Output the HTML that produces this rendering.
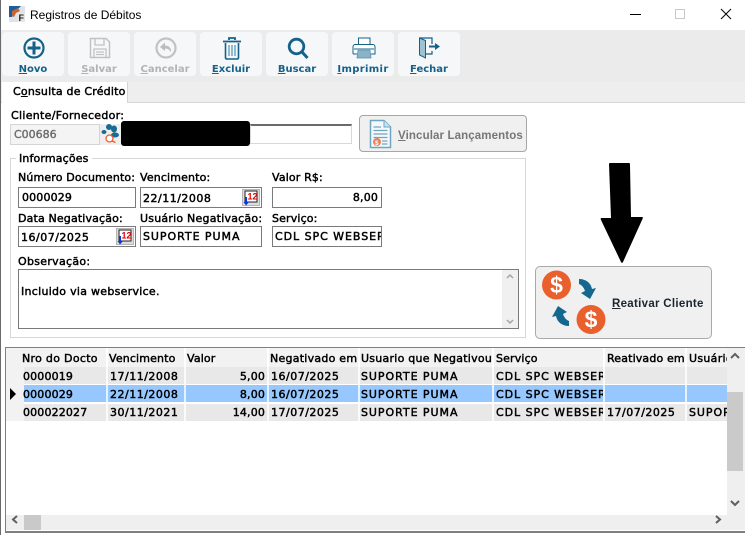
<!DOCTYPE html>
<html><head><meta charset="utf-8"><style>
html,body{margin:0;padding:0;background:#fff}
#w{position:relative;width:745px;height:535px;overflow:hidden;background:#fff;font-family:"DejaVu Sans",sans-serif;font-size:11px;color:#000}
#w div,#w span.a,#w svg{position:absolute}
.t{white-space:pre;line-height:14px;height:14px}
.b{font-weight:normal;-webkit-text-stroke:.45px #000;letter-spacing:.15px}
.tb{top:32px;width:62px;height:44px;background:#f6f7f9;border-radius:4px}
.tl{position:absolute;left:0;right:0;top:31px;text-align:center;font-family:"DejaVu Sans",sans-serif;font-size:10px;font-weight:bold;line-height:13px;color:#14618a}
.dis{color:#b3b3b3}
.i{border:1px solid #7a7a7a;box-sizing:border-box;background:#fff;line-height:20px;padding-left:3px;white-space:pre;overflow:hidden}
.c{height:18px;line-height:20px;white-space:pre;overflow:hidden;box-sizing:border-box;padding-left:3px}
.h{top:349px;height:17px;line-height:19px;white-space:pre;overflow:hidden;padding-left:2px;box-sizing:border-box}
.d{letter-spacing:.5px}
.u{letter-spacing:.95px}
u{text-decoration:underline}
</style></head><body><div id="w">
<div style="left:0;top:0;width:1px;height:535px;background:#6a6a6a"></div>
<svg style="left:9px;top:6px" width="16" height="16" viewBox="0 0 16 16"><rect width="16" height="16" fill="#dfe3e6"/><path d="M0 0H12L8 4 5 6 3 11H0Z" fill="#1f5c9a"/><path d="M3 5 9 2 11 5 7 7 5 11 3 10Z" fill="#c9652e"/><rect x="8" y="7" width="8" height="9" fill="#e6e6e6"/><text x="9.5" y="15" font-family="Liberation Sans" font-size="9" font-weight="bold" fill="#222">F</text></svg>
<div class="t" style="left:30px;top:8px;font-family:'Liberation Sans',sans-serif;font-size:12px">Registros de Débitos</div>
<svg style="left:625px;top:8px" width="110" height="14"><path d="M5 6.5H16" stroke="#000" fill="none"/><rect x="50.500" y="1.500" width="9" height="9" stroke="#c8c8c8" fill="none"/><path d="M96 1 106 11M106 1 96 11" stroke="#000" fill="none"/></svg>

<div style="left:1px;top:30px;width:744px;height:52px;background:#ebebeb"></div>
<div class="tb" style="left:2px"><svg style="left:21px;top:5px" width="22" height="22" viewBox="0 0 22 22"><circle cx="11" cy="11" r="9.500" fill="none" stroke="#14618a" stroke-width="2.200"/><path d="M11 4.500V17.500M4.500 11H17.500" stroke="#14618a" stroke-width="3"/></svg><div class="tl"><u>N</u>ovo</div></div>
<div class="tb" style="left:68px"><svg style="left:21px;top:5px" width="22" height="22" viewBox="0 0 22 22"><path d="M1.500 1.500H17L20.500 5V20.500H1.500Z" fill="none" stroke="#c2c2c2" stroke-width="1.500"/><path d="M6 2V8H15V2M5 20V12H17V20M7 15H15M7 17.500H15" fill="none" stroke="#c2c2c2" stroke-width="1.300"/></svg><div class="tl dis"><u>S</u>alvar</div></div>
<div class="tb" style="left:134px"><svg style="left:21px;top:5px" width="22" height="22" viewBox="0 0 22 22"><circle cx="11" cy="11" r="9.500" fill="none" stroke="#c2c2c2" stroke-width="2.200"/><path d="M10 5.500 5 10 10 14V11.500C13 11.500 15 13 16 15.500 16.500 11 14 8.500 10 8.500Z" fill="#bdbdbd"/></svg><div class="tl dis"><u>C</u>ancelar</div></div>
<div class="tb" style="left:200px"><svg style="left:21px;top:4px" width="22" height="24" viewBox="0 0 22 24"><path d="M2 5.500H20M8 4V2H14V4" fill="none" stroke="#14618a" stroke-width="1.800"/><path d="M4.500 7V21.500C4.500 22.500 5 23 6 23H16C17 23 17.500 22.500 17.500 21.500V7" fill="none" stroke="#14618a" stroke-width="1.600"/><path d="M8 9V20M11 9V20M14 9V20" stroke="#6fa6bf" stroke-width="1.500"/></svg><div class="tl"><u>E</u>xcluir</div></div>
<div class="tb" style="left:266px"><svg style="left:21px;top:5px" width="22" height="23" viewBox="0 0 22 23"><circle cx="9.500" cy="9.500" r="7.300" fill="none" stroke="#14618a" stroke-width="2.800"/><path d="M15 15 20.500 21" stroke="#14618a" stroke-width="3"/></svg><div class="tl"><u>B</u>uscar</div></div>
<div class="tb" style="left:332px"><svg style="left:20px;top:5px" width="24" height="22" viewBox="0 0 24 22"><path d="M6.500 8V1H18V8" fill="#fff" stroke="#14618a"/><path d="M1 17V10C1 8.500 2 7.500 3 7.500H21C22 7.500 23 8.500 23 10V17H19" fill="#fff" stroke="#14618a"/><rect x="2" y="11" width="20" height="2" fill="#8ab3c8"/><path d="M6 13H18L19 21H5Z" fill="#8ab3c8" stroke="#5d93ad" stroke-width=".8"/><path d="M1 17H5" stroke="#14618a"/></svg><div class="tl" style="letter-spacing:.35px"><u>I</u>mprimir</div></div>
<div class="tb" style="left:398px"><svg style="left:20px;top:5px" width="24" height="23" viewBox="0 0 24 23"><path d="M1.500 1H14V7M14 14V17H7.500" fill="none" stroke="#14618a" stroke-width="1.200"/><path d="M1.500 1 7.500 3.500V21L1.500 18Z" fill="#9cc2d4" stroke="#14618a" stroke-width="1"/><path d="M11 8.500H17V6L22 9.500 17 13V10.500H11Z" fill="#14618a"/></svg><div class="tl"><u>F</u>echar</div></div>

<div style="left:1px;top:82px;width:744px;height:21px;background:#eeeeee;border-bottom:1px solid #d8d8d8;box-sizing:border-box"></div>
<div style="left:2px;top:82px;width:126px;height:21px;background:#fff;border-right:1px solid #d4d4d4;box-sizing:border-box"></div>
<div class="t b" style="left:13px;top:85px;letter-spacing:.2px"><span>C<u>o</u>nsulta de Crédito</span></div>

<div class="t b" style="left:11px;top:109px;letter-spacing:.3px">Cliente/Fornecedor:</div>
<div style="left:10px;top:124px;width:90px;height:21px;background:#f4f4f4;border:1px solid #d4d4d4;box-sizing:border-box;line-height:20px;padding-left:3px;color:#6d6d6d;-webkit-text-stroke:.4px #6d6d6d">C00686</div>
<div style="left:100px;top:124px;width:21px;height:21px;background:#eee"></div>
<svg style="left:101px;top:123px" width="20" height="22" viewBox="0 0 20 22"><ellipse cx="8" cy="4" rx="3" ry="3" fill="#1b6a92"/><ellipse cx="13" cy="6" rx="3" ry="3.500" fill="#1b6a92"/><ellipse cx="3" cy="9" rx="2.500" ry="2" fill="#1b6a92"/><ellipse cx="14" cy="12" rx="4" ry="2.500" fill="#1b6a92"/><circle cx="8.500" cy="15.500" r="3.500" fill="#fff" stroke="#e8602c" stroke-width="1.300"/><path d="M11 18 14.500 19.500" stroke="#e8602c" stroke-width="1.300"/></svg>
<div style="left:250px;top:124px;width:102px;height:20px;border:1px solid #d8d8d8;border-top:2px solid #6a6a6a;box-sizing:border-box;background:#fff"></div>
<div style="left:121px;top:121px;width:129px;height:25px;background:#000;border-radius:3px"></div>

<div style="left:359px;top:115px;width:168px;height:37px;background:#f0f0f0;border:1px solid #a6a6a6;border-radius:4px;box-sizing:border-box"></div>
<svg style="left:369px;top:119px" width="23" height="30" viewBox="0 0 23 30"><path d="M1.500 1.500H15L21.500 8V28.500H1.500Z" fill="#f4f8fa" stroke="#6fa6bf" stroke-width="1.500"/><path d="M15 1.500V8H21.500" fill="#cfe1ea" stroke="#6fa6bf"/><path d="M4.500 8H12M4.500 11.500H18.500M4.500 15H18.500M4.500 18.500H18.500M13 22H18.500M13 25H18.500" stroke="#6fa6bf" stroke-width="1.300"/><circle cx="8" cy="23" r="4" fill="#e8805a"/><text x="6" y="26" font-size="6.500" fill="#fff" font-family="Liberation Sans" font-weight="bold">$</text></svg>
<div class="t" style="left:398px;top:129px;font-weight:bold;color:#767676;font-family:'Liberation Sans',sans-serif;letter-spacing:.12px;font-size:11.500px"><u>V</u>incular Lançamentos</div>

<div style="left:10px;top:158px;width:516px;height:180px;border:1px solid #d6d6d6;box-sizing:border-box"></div>
<div class="t b" style="left:16px;top:152px;background:#fff;padding:0 3px">Informações</div>

<div class="t b" style="left:18px;top:171px">Número Documento:</div>
<div class="t b" style="left:140px;top:171px">Vencimento:</div>
<div class="t b" style="left:272px;top:171px">Valor R$:</div>
<div class="i b" style="left:18px;top:187px;width:118px;height:21px">0000029</div>
<div class="i b d" style="left:140px;top:187px;width:122px;height:21px;padding-left:2px;line-height:21px">22/11/2008</div>
<div class="i b" style="left:272px;top:187px;width:110px;height:21px;text-align:right;padding-right:3px">8,00</div>

<div class="t b" style="left:18px;top:212px">Data Negativação:</div>
<div class="t b" style="left:140px;top:212px;letter-spacing:.22px">Usuário Negativação:</div>
<div class="t b" style="left:272px;top:212px">Serviço:</div>
<div class="i b d" style="left:18px;top:226px;width:118px;height:21px;padding-left:2px;line-height:21px">16/07/2025</div>
<div class="i b u" style="left:140px;top:226px;width:122px;height:21px;padding-left:2px">SUPORTE PUMA</div>
<div class="i b u" style="left:272px;top:226px;width:110px;height:21px;padding-right:1px;padding-left:2px"><span style="display:block;width:106px;overflow:hidden">CDL SPC WEBSERVICE</span></div>

<svg style="left:242px;top:189px" width="18" height="17" viewBox="0 0 18 17"><rect x=".5" y=".5" width="17" height="16" fill="#dcdcdc" stroke="#b5b5b5"/><rect x="3" y="2" width="12" height="11" fill="#fff" stroke="#222"/><text x="5.500" y="10.500" font-size="9" fill="#e00000" font-family="Liberation Sans" font-weight="bold">12</text><path d="M3 8H5V13H7L4 16.500 1.500 13H3Z" fill="#0a35d8"/></svg>
<svg style="left:116px;top:228px" width="18" height="17" viewBox="0 0 18 17"><rect x=".5" y=".5" width="17" height="16" fill="#dcdcdc" stroke="#b5b5b5"/><rect x="3" y="2" width="12" height="11" fill="#fff" stroke="#222"/><text x="5.500" y="10.500" font-size="9" fill="#e00000" font-family="Liberation Sans" font-weight="bold">12</text><path d="M3 8H5V13H7L4 16.500 1.500 13H3Z" fill="#0a35d8"/></svg>

<div class="t b" style="left:18px;top:255px;letter-spacing:.3px">Observação:</div>
<div style="left:18px;top:269px;width:501px;height:60px;border:1px solid #7a7a7a;box-sizing:border-box;background:#fff"></div>
<div class="t b" style="left:21px;top:285px;letter-spacing:.28px">Incluido via webservice.</div>
<div style="left:502px;top:270px;width:16px;height:58px;background:#f0f0f0"></div>
<svg style="left:502px;top:270px" width="16" height="58"><path d="M5 8 8 5 11 8M5 50 8 53 11 50" stroke="#a3a3a3" stroke-width="1.500" fill="none"/></svg>

<svg style="left:598px;top:160px" width="48" height="106" viewBox="0 0 48 106"><path d="M11 4C11 3 12 3 13 3H31C32 3 32 4 32 5L33 57H44C45 57 45 58 44.500 59L25 102C24.500 103 23.500 103 23 102L3 60C2.500 59 2.500 58 3.500 58H13Z" fill="#000"/></svg>

<div style="left:535px;top:266px;width:177px;height:73px;background:#f0f0f0;border:1px solid #a9a9a9;border-radius:5px;box-sizing:border-box"></div>
<svg style="left:540px;top:268px" width="72" height="70" viewBox="0 0 72 70"><circle cx="16.500" cy="17" r="14.500" fill="#e9602c"/><circle cx="51" cy="51.500" r="14.500" fill="#e9602c"/><text x="16.500" y="25" text-anchor="middle" font-family="Liberation Sans" font-weight="bold" font-size="23" fill="#fff">$</text><text x="51" y="59.500" text-anchor="middle" font-family="Liberation Sans" font-weight="bold" font-size="23" fill="#fff">$</text><path d="M39 11C46 11 51 15 52 21L56 20 50 31 41 25 45 23C44 20 42 17 39 16Z" fill="#14688f"/><path d="M39 11C46 11 51 15 52 21L56 20 50 31 41 25 45 23C44 20 42 17 39 16Z" fill="#14688f" transform="rotate(180 34 34.500)"/></svg>
<div class="t" style="left:612px;top:297px;font-family:'Liberation Sans',sans-serif;font-size:11.500px;font-weight:bold;letter-spacing:.3px;color:#1a2530"><u>R</u>eativar Cliente</div>

<div style="left:5px;top:347px;width:740px;height:186px;border:1px solid #7f7f7f;border-right:none;border-bottom:2px solid #7f7f7f;box-sizing:border-box;background:#fff"></div>
<div style="left:6px;top:348px;width:721px;height:19px;background:#f2f2f2"></div>
<div style="left:6px;top:367px;width:18px;height:54px;background:#f2f2f2"></div>

<div class="h b" style="left:20px;width:86px;letter-spacing:.3px">Nro do Docto</div>
<div class="h b" style="left:107px;width:77px">Vencimento</div>
<div class="h b" style="left:185px;width:82px">Valor</div>
<div class="h b" style="left:268px;width:90px;letter-spacing:.25px">Negativado em</div>
<div class="h b" style="left:359px;width:134px;letter-spacing:.25px">Usuario que Negativou</div>
<div class="h b" style="left:494px;width:110px">Serviço</div>
<div class="h b" style="left:605px;width:82px">Reativado em</div>
<div class="h b" style="left:687px;width:40px;letter-spacing:.3px">Usuário</div>

<svg style="left:0;top:348px" width="730" height="73"><g stroke="#fff" stroke-width="2" fill="none"><path d="M107 0V73M185 0V73M268 0V73M359 0V73M493 0V73M604 0V73M686 0V73"/></g></svg>

<div style="left:24px;top:367px;width:703px;height:17px;background:#e8e8e8"></div>
<div style="left:24px;top:385px;width:703px;height:17px;background:#96c8ff"></div>
<div style="left:24px;top:404px;width:703px;height:17px;background:#e8e8e8"></div>
<svg style="left:0;top:367px" width="730" height="54"><path d="M107 0V54M185 0V54M268 0V54M359 0V54M493 0V54M604 0V54M686 0V54" stroke="#fff" stroke-width="1.500" fill="none"/></svg>
<svg style="left:9px;top:388px" width="8" height="12"><path d="M1 0 7 6 1 12Z" fill="#000"/></svg>

<div class="c b" style="left:20px;top:367px">0000019</div>
<div class="c b d" style="left:107px;top:367px">17/11/2008</div>
<div class="c b" style="left:186px;top:367px;width:79px;text-align:right;padding:0">5,00</div>
<div class="c b d" style="left:268px;top:367px;width:90px">16/07/2025</div>
<div class="c b u" style="left:358px;top:367px">SUPORTE PUMA</div>
<div class="c b u" style="left:493px;top:367px;width:110px">CDL SPC WEBSERVICE</div>

<div class="c b" style="left:20px;top:385px">0000029</div>
<div class="c b d" style="left:107px;top:385px">22/11/2008</div>
<div class="c b" style="left:186px;top:385px;width:79px;text-align:right;padding:0">8,00</div>
<div class="c b d" style="left:268px;top:385px;width:90px">16/07/2025</div>
<div class="c b u" style="left:358px;top:385px">SUPORTE PUMA</div>
<div class="c b u" style="left:493px;top:385px;width:110px">CDL SPC WEBSERVICE</div>

<div class="c b" style="left:20px;top:403px">000022027</div>
<div class="c b d" style="left:107px;top:403px">30/11/2021</div>
<div class="c b" style="left:186px;top:403px;width:79px;text-align:right;padding:0">14,00</div>
<div class="c b d" style="left:268px;top:403px;width:90px">17/07/2025</div>
<div class="c b u" style="left:358px;top:403px">SUPORTE PUMA</div>
<div class="c b u" style="left:493px;top:403px;width:110px">CDL SPC WEBSERVICE</div>
<div class="c b d" style="left:604px;top:403px;width:82px">17/07/2025</div>
<div class="c b u" style="left:686px;top:403px;width:41px">SUPORTE</div>

<div style="left:727px;top:348px;width:18px;height:167px;background:#efefef"></div>
<div style="left:727px;top:392px;width:16px;height:79px;background:#cacaca"></div>
<div style="left:6px;top:515px;width:739px;height:15px;background:#efefef"></div>
<div style="left:24px;top:515px;width:17px;height:15px;background:#c9c9c9"></div>
<svg style="left:0;top:345px" width="745" height="190"><path d="M731 13 735 9 739 13M731 156 735 160 739 156M17 171 13 174.500 17 178M716 171 720 174.500 716 178" stroke="#5f5f5f" stroke-width="2" fill="none"/></svg>
</div></body></html>
